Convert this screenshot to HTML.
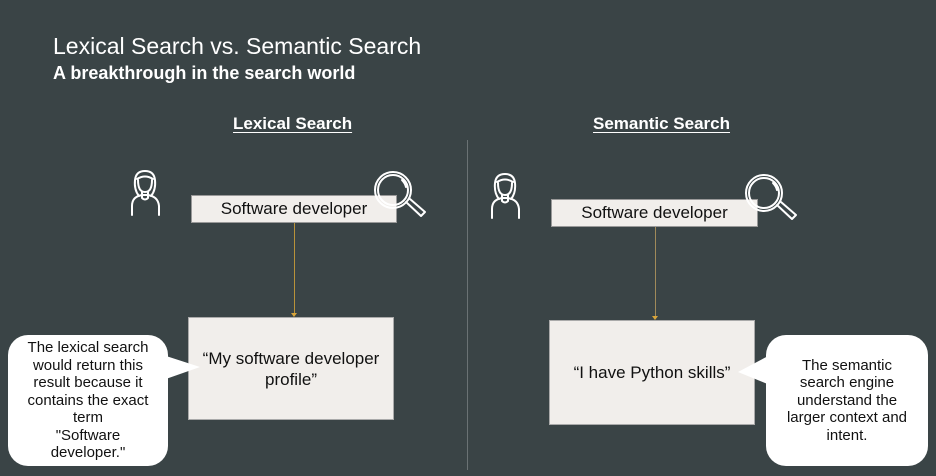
<!DOCTYPE html>
<html><head><meta charset="utf-8"><style>
body{margin:0;width:936px;height:476px;background:#3a4446;font-family:"Liberation Sans",sans-serif;position:relative;overflow:hidden;color:#fff}
.a{position:absolute}
.box{position:absolute;background:#f1eeeb;color:#111;display:flex;align-items:center;justify-content:center;text-align:center}
.h{font-weight:bold;font-size:17px;text-decoration:underline;text-underline-offset:3px}
.bub{position:absolute;background:#fff;color:#111;border-radius:20px;text-align:center;font-size:15px;line-height:17.5px;display:flex;align-items:center;justify-content:center}
</style></head><body>
<div class="a" style="left:53px;top:33px;font-size:23px">Lexical Search vs. Semantic Search</div>
<div class="a" style="left:53px;top:63px;font-size:18px;font-weight:bold">A breakthrough in the search world</div>
<div class="a h" style="left:233px;top:114px">Lexical Search</div>
<div class="a h" style="left:593px;top:114px">Semantic Search</div>
<div class="a" style="left:467px;top:140px;width:1px;height:330px;background:#6a7274"></div>

<div class="a" style="left:294px;top:223px;width:1px;height:92px;background:#b8923a"></div>
<div class="a" style="left:291px;top:313px;border:3px solid transparent;border-top:4px solid #d9a53a"></div>
<div class="a" style="left:655px;top:226px;width:1px;height:92px;background:#a08a5a"></div>
<div class="a" style="left:652px;top:316px;border:3px solid transparent;border-top:4px solid #d9a53a"></div>

<div class="box" style="left:191px;top:195px;width:206px;height:28px;font-size:17px;border:1px solid #999;box-sizing:border-box">Software developer</div>
<div class="box" style="left:551px;top:199px;width:207px;height:28px;font-size:17px;border:1px solid #999;box-sizing:border-box">Software developer</div>
<div class="box" style="left:188px;top:317px;width:206px;height:103px;font-size:17px;line-height:21px;border:1px solid #aaa;box-sizing:border-box">“My software developer<br>profile”</div>
<div class="box" style="left:549px;top:320px;width:206px;height:105px;font-size:17px;border:1px solid #aaa;box-sizing:border-box">“I have Python skills”</div>

<svg class="a" style="left:0;top:0" width="936" height="476">
<g fill="none" stroke="#fff" stroke-width="2" stroke-linecap="round" stroke-linejoin="round">
 <g id="p" transform="translate(131,170)">
  <path d="M1 45 V36 Q1 26 12 25 L16 25 Q27 26 28 36 V45"/>
  <path d="M8 26 Q3 20 4 10 Q5 1 14 1 Q23 1 24 10 Q25 20 20 26"/>
  <path d="M6 9 Q14 4 22 9 M7 10 Q7 22 14 22 Q21 22 21 10 M11 22 V28 Q14 31 17 28 V22"/>
 </g>
 <use href="#p" transform="translate(360,3)"/>
 <g id="m" transform="translate(374,171)">
  <circle cx="19" cy="19" r="18"/><circle cx="19" cy="19" r="15"/>
  <path d="M28 9 Q31 12 32 16"/>
  <path d="M32 31 L47 45 L51 41 L36 28"/>
 </g>
 <use href="#m" transform="translate(371,3)"/>
</g>
<path d="M163 355 L200 367 L163 380 Z" fill="#fff"/>
<path d="M770 355 L738 372 L770 385 Z" fill="#fff"/>
</svg>

<div class="bub" style="left:8px;top:335px;width:160px;height:131px">The lexical search<br>would return this<br>result because it<br>contains the exact<br>term<br>"Software<br>developer."</div>
<div class="bub" style="left:766px;top:335px;width:162px;height:131px">The semantic<br>search engine<br>understand the<br>larger context and<br>intent.</div>
</body></html>
